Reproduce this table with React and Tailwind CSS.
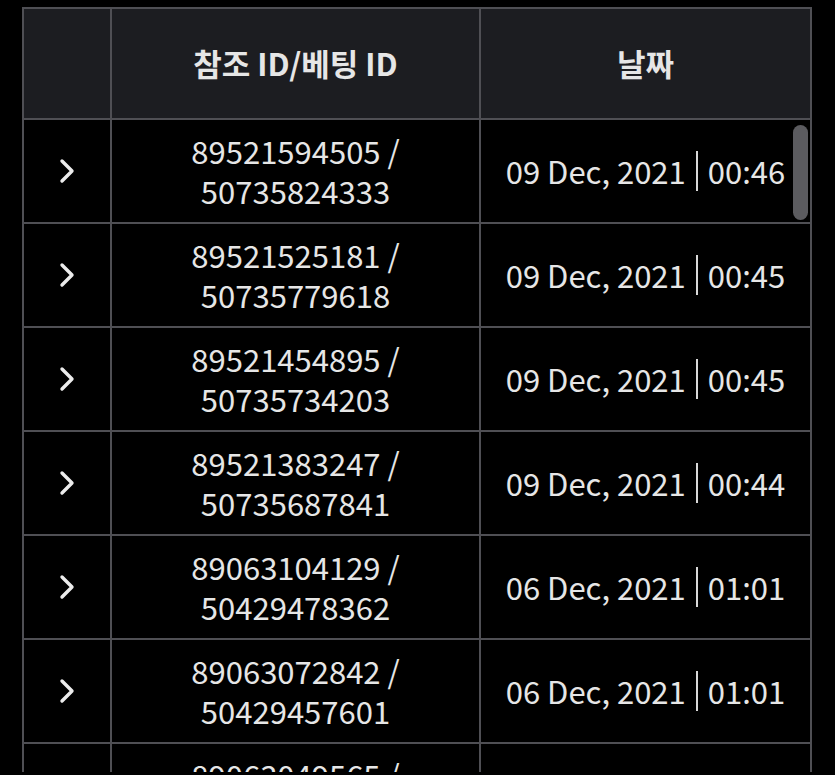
import React from "react";

const rows = [
  ["89521594505", "50735824333", "09 Dec, 2021", "00:46"],
  ["89521525181", "50735779618", "09 Dec, 2021", "00:45"],
  ["89521454895", "50735734203", "09 Dec, 2021", "00:45"],
  ["89521383247", "50735687841", "09 Dec, 2021", "00:44"],
  ["89063104129", "50429478362", "06 Dec, 2021", "01:01"],
  ["89063072842", "50429457601", "06 Dec, 2021", "01:01"],
  ["89063049565", "50429441190", "06 Dec, 2021", "01:00"],
];

function Chevron() {
  return (
    <svg width="18" height="26" viewBox="0 0 18 26" fill="none">
      <polyline
        points="4,3 14,13 4,23"
        stroke="#ececec"
        strokeWidth="3.4"
        strokeLinecap="round"
        strokeLinejoin="round"
      />
    </svg>
  );
}

export default function App() {
  return (
    <div
      className="w-[835px] h-[775px] bg-black overflow-hidden"
      style={{ fontFamily: '"Noto Sans CJK KR", "Noto Sans", sans-serif' }}
    >
      <div className="h-[772px] overflow-hidden pt-[7px] pl-[22px]">
        <div className="relative w-[790px]">
          <div className="grid grid-cols-[86px_367px_329px] gap-[2px] p-[2px] bg-[#4f4f54] text-[#e6e6e6]">
            <div className="h-[109px] bg-[#1c1d21]" />
            <div className="h-[109px] bg-[#1c1d21] flex items-center justify-center text-[31px] font-bold">
              참조 ID/베팅 ID
            </div>
            <div className="h-[109px] bg-[#1c1d21] flex items-center justify-center text-[31px] font-bold">
              날짜
            </div>
            {rows.map((r, i) => (
              <React.Fragment key={i}>
                <div className="h-[102px] bg-black flex items-center justify-center">
                  <Chevron />
                </div>
                <div className="h-[102px] bg-black flex flex-col items-center justify-center text-[31px] leading-[40px]">
                  <span>{r[0]} /</span>
                  <span>{r[1]}</span>
                </div>
                <div className="h-[102px] bg-black flex items-center justify-center text-[31px] leading-[40px]">
                  <span>{r[2]}</span>
                  <span className="mx-[10px] w-[2px] h-[40px] bg-[#d8d8d8]" />
                  <span>{r[3]}</span>
                </div>
              </React.Fragment>
            ))}
          </div>
          <div className="absolute left-[771px] top-[118px] w-[15px] h-[95px] rounded-full bg-[#5b5b5f]" />
        </div>
      </div>
    </div>
  );
}
